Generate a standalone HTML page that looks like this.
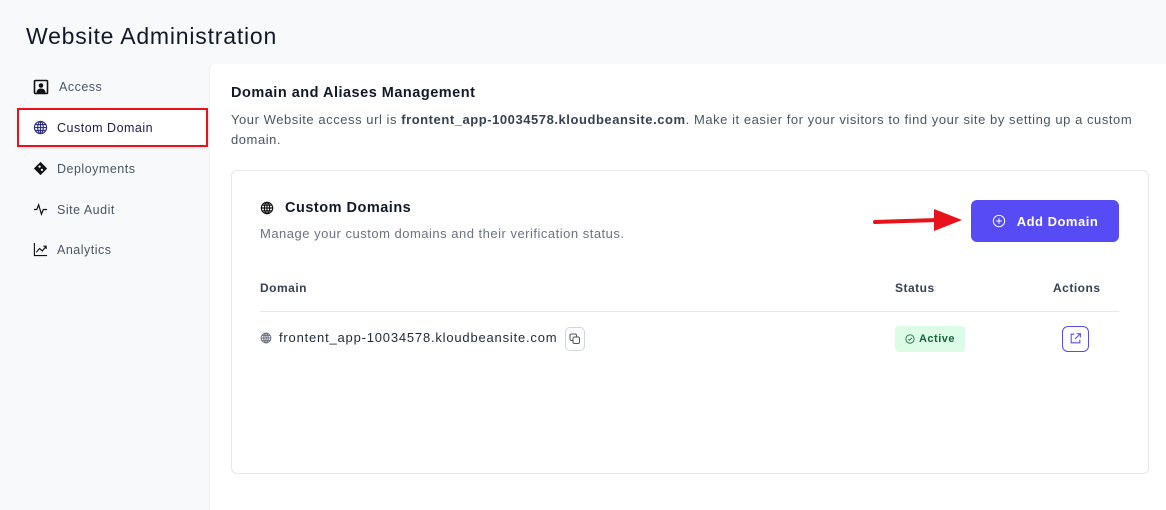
<!DOCTYPE html>
<html><head><meta charset="utf-8"><style>
*{box-sizing:border-box;margin:0;padding:0}
body{width:1166px;height:510px;overflow:hidden;background:#f8f9fa;font-family:"Liberation Sans",sans-serif;color:#1f2937;position:relative;letter-spacing:0.5px}
.abs{position:absolute}
h1{position:absolute;left:26px;top:23px;font-size:23px;font-weight:400;color:#111827;letter-spacing:0.8px}
.nav{position:absolute;left:33px;font-size:12.5px;color:#4b5563;display:flex;align-items:center;gap:9px}
.main{position:absolute;left:209px;top:64px;width:957px;height:446px;background:#fff;border-top-left-radius:6px;border-left:1px solid #eef0f2}
.card{position:absolute;left:231px;top:170px;width:918px;height:304px;border:1px solid #e5e7eb;border-radius:6px;background:#fff}
.th{position:absolute;top:281px;font-size:12px;font-weight:700;color:#374151}
</style></head><body>
<h1>Website Administration</h1>
<div class="nav" style="top:79px"><svg width="16" height="16" viewBox="0 0 16 16"><rect x="1.5" y="1.5" width="13" height="13" rx="1" fill="none" stroke="#111" stroke-width="1.6"/><circle cx="8" cy="6.5" r="2.3" fill="#111"/><path d="M3.5 14c0-3 2-4.5 4.5-4.5s4.5 1.5 4.5 4.5z" fill="#111"/></svg><span style="margin-left:1px">Access</span></div>
<div class="abs" style="left:17px;top:108px;width:191px;height:39px;border:2px solid #e8131a;background:#fff;box-shadow:0 1px 3px rgba(0,0,0,.1)"></div>
<div class="nav" style="top:120px;color:#1e1b4b"><svg width="15" height="15" viewBox="0 0 16 16" fill="none" stroke="#312e81" stroke-width="1.2"><circle cx="8" cy="8" r="6.5"/><ellipse cx="8" cy="8" rx="3" ry="6.5"/><path d="M1.5 8h13M2.5 4.8h11M2.5 11.2h11M8 1.5v13"/></svg>Custom Domain</div>
<div class="nav" style="top:161px"><svg width="15" height="15" viewBox="0 0 16 16"><rect x="3" y="3" width="10" height="10" transform="rotate(45 8 8)" fill="#111"/><circle cx="7" cy="6" r="1.2" fill="#fff"/><circle cx="9.5" cy="9.5" r="1.2" fill="#fff"/></svg>Deployments</div>
<div class="nav" style="top:202px"><svg width="15" height="15" viewBox="0 0 16 16" fill="none" stroke="#111" stroke-width="1.3"><path d="M1 8h3l2-5 3 10 2-5h4"/></svg>Site Audit</div>
<div class="nav" style="top:242px"><svg width="15" height="15" viewBox="0 0 16 16" fill="none" stroke="#111" stroke-width="1.2"><path d="M1.5 1v13.5H15M3.5 11l3.5-4 3 2.5 4-5M11 4.5h3v3"/></svg>Analytics</div>
<div class="main"></div>
<div class="abs" style="left:231px;top:85px;font-size:14.5px;font-weight:700;color:#111827">Domain and Aliases Management</div>
<div class="abs" style="left:231px;top:110px;width:915px;font-size:13px;line-height:20px;color:#4b5563;letter-spacing:0.55px">Your Website access url is <b style="color:#374151">frontent_app-10034578.kloudbeansite.com</b>. Make it easier for your visitors to find your site by setting up a custom domain.</div>
<div class="card"></div>
<div class="abs" style="left:260px;top:200px;display:flex;align-items:center;gap:11px;font-size:14.5px;font-weight:700;color:#111827"><svg width="14" height="14" viewBox="0 0 16 16" fill="none" stroke="#111" stroke-width="1.3"><circle cx="8" cy="8" r="6.5"/><ellipse cx="8" cy="8" rx="3" ry="6.5"/><path d="M1.5 8h13M2.5 4.8h11M2.5 11.2h11M8 1.5v13"/></svg>Custom Domains</div>
<div class="abs" style="left:260px;top:226px;font-size:13px;color:#6b7280">Manage your custom domains and their verification status.</div>
<svg class="abs" style="left:872px;top:208px" width="92" height="24"><path d="M3 14L66 12" stroke="#e8131a" stroke-width="4" stroke-linecap="round"/><path d="M62 1L90 12L62 23z" fill="#e8131a"/></svg>
<div class="abs" style="left:971px;top:200px;width:148px;height:42px;background:#574bf5;border-radius:6px;color:#fff;font-size:13px;font-weight:700;display:flex;align-items:center;justify-content:center;gap:11px"><svg width="14" height="14" viewBox="0 0 16 16" fill="none" stroke="#fff" stroke-width="1.1"><circle cx="8" cy="8" r="6.5"/><path d="M8 4.8v6.4M4.8 8h6.4"/></svg>Add Domain</div>
<div class="th" style="left:260px">Domain</div>
<div class="th" style="left:895px">Status</div>
<div class="th" style="left:1053px">Actions</div>
<div class="abs" style="left:260px;top:311px;width:859px;height:1px;background:#e5e7eb"></div>
<div class="abs" style="left:260px;top:330px;display:flex;align-items:center;gap:7px;font-size:13px;color:#1f2937;letter-spacing:0.8px"><svg width="12" height="12" viewBox="0 0 16 16" fill="none" stroke="#6b7280" stroke-width="1.3"><circle cx="8" cy="8" r="6.5"/><ellipse cx="8" cy="8" rx="3" ry="6.5"/><path d="M1.5 8h13M2.5 4.8h11M2.5 11.2h11M8 1.5v13"/></svg>frontent_app-10034578.kloudbeansite.com</div>
<div class="abs" style="left:565px;top:327px;width:20px;height:24px;border:1px solid #d1d5db;border-radius:5px"><svg style="position:absolute;left:3px;top:5px" width="12" height="12" viewBox="0 0 12 12" fill="none" stroke="#4b5563" stroke-width="1"><rect x="1" y="1" width="6.5" height="6.5" rx="1.5"/><rect x="4" y="4" width="6.5" height="6.5" rx="1.5" fill="#fff"/></svg></div>
<div class="abs" style="left:895px;top:326px;width:70px;height:26px;background:#dcfce7;border-radius:4px;color:#166534;font-size:11px;font-weight:700;display:flex;align-items:center;justify-content:center;gap:4px"><svg width="10" height="10" viewBox="0 0 12 12" fill="none" stroke="#166534" stroke-width="1"><circle cx="6" cy="6" r="5"/><path d="M3.8 6l1.6 1.6L8.5 4.5"/></svg>Active</div>
<div class="abs" style="left:1062px;top:326px;width:27px;height:26px;border:1.5px solid #574bf5;border-radius:6px"><svg style="position:absolute;left:6px;top:5px" width="13" height="13" viewBox="0 0 12 12" fill="none" stroke="#574bf5" stroke-width="1"><path d="M5 2H2v8h8V7M7 1.5h3.5V5M10.5 1.5L5.5 6.5"/></svg></div>
</body></html>
